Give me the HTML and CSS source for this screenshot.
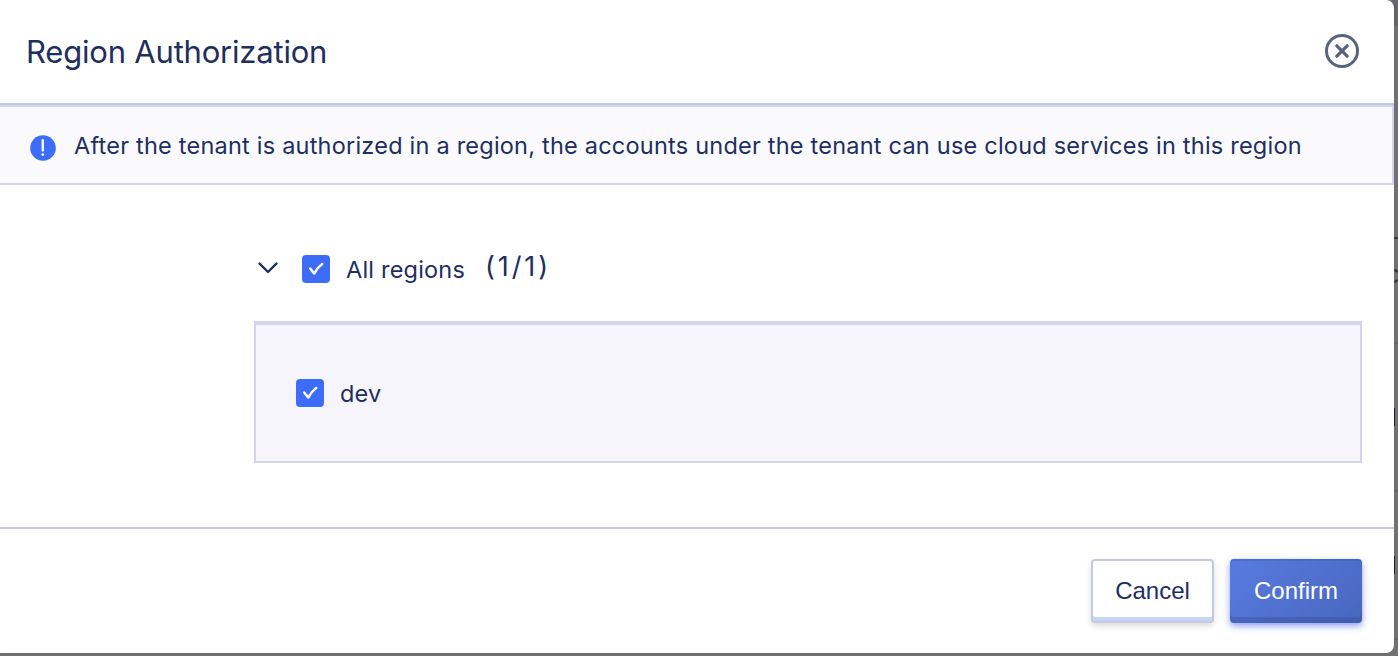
FILE: index.html
```html
<!DOCTYPE html>
<html lang="en">
<head>
<meta charset="utf-8">
<title>Region Authorization</title>
<link rel="stylesheet" href="styles.css">
</head>
<body>
<div class="backdrop" aria-hidden="true">
  <i class="shade"></i><i class="dash"></i>
  <svg class="peek" viewBox="0 0 4 14"><path d="M0 1.2H1.5Q3 1.6 3.6 3.5M0 12.6H1.5Q3 12.2 3.8 10.5"/></svg>
  <i class="line l1"></i><i class="line l2"></i><i class="line l3"></i>
  <i class="mark m1"></i><i class="mark m2"></i>
</div>
<main class="modal">
  <header class="header">
    <h1 class="title">Region Authorization</h1>
    <svg class="close" viewBox="0 0 34 34"><circle cx="17" cy="17" r="15.5"/><path d="M11.8 11.8l10.4 10.4M22.2 11.8L11.8 22.2"/></svg>
  </header>
  <section class="notice">
    <svg class="info" viewBox="0 0 26 26"><circle cx="13" cy="13" r="12.8"/><path d="M12.8 5.2v10.2"/><circle class="dot" cx="12.8" cy="19.6" r="1.4"/></svg>
    <p class="notice-text">After the tenant is authorized in a region, the accounts under the tenant can use cloud services in this region</p>
  </section>
  <section class="content">
    <div class="group">
      <svg class="chevron" viewBox="0 0 20 12"><path d="M1.6 1.6L10 10L18.4 1.6"/></svg>
      <svg class="check" viewBox="0 0 28 28"><path d="M8.2 13.4L12.2 18.6Q15.2 12.6 20.2 9"/></svg>
      <span class="label all">All regions</span>
      <span class="count">(1/1)</span>
    </div>
    <div class="panel">
      <svg class="check" viewBox="0 0 28 28"><path d="M8.2 13.4L12.2 18.6Q15.2 12.6 20.2 9"/></svg>
      <span class="label dev">dev</span>
    </div>
  </section>
  <footer class="footer">
    <button class="btn cancel">Cancel</button>
    <button class="btn confirm">Confirm</button>
  </footer>
</main>
</body>
</html>
```
FILE: styles.css
```css
* { box-sizing: border-box; }
body {
  margin: 0;
  height: 656px;
  overflow: hidden;
  background: #747474;
  color: #202e60;
  font-family: Inter, "Liberation Sans", sans-serif;
}
.modal {
  position: relative;
  display: flex;
  flex-direction: column;
  width: 1394px;
  height: 653px;
  background: #fff;
  border-radius: 0 8px 8px 0;
  box-shadow: 0 1px 4px rgba(0, 0, 0, .1);
}
.header {
  display: flex;
  align-items: center;
  justify-content: space-between;
  height: 105px;
  padding: 0 35px 2px 26px;
  border-bottom: 2px solid #c4cadb;
}
.title { margin: 0; padding-top: 2px; font-size: 31px; font-weight: 400; line-height: 40px; letter-spacing: -.2px; white-space: nowrap; }
.close { width: 34px; height: 34px; fill: none; stroke: #57647b; stroke-width: 3; }
.close path { stroke-width: 3.2; stroke-linecap: round; }
.notice {
  display: flex;
  align-items: center;
  height: 80px;
  padding-left: 30px;
  background: #fafafd;
  border: 2px solid #d3d6ea;
  border-left: 0;
}
.info { width: 26px; height: 26px; margin: 5px 18px 0 0; fill: #3d6cf9; }
.info path { stroke: #fff; stroke-width: 2.4; stroke-linecap: round; }
.info .dot { fill: #fff; }
.notice-text { margin: 0; padding-top: 2px; font-size: 23.5px; line-height: 32px; letter-spacing: .22px; white-space: nowrap; }
.content { flex: 1; padding: 64px 32px 0 254px; }
.group { display: flex; align-items: center; height: 40px; padding-left: 4px; }
.chevron { width: 20px; height: 12px; margin: -2px 24px 0 0; fill: none; stroke: #202e60; stroke-width: 2.4; stroke-linecap: round; stroke-linejoin: round; }
.check { width: 28px; height: 28px; margin-right: 16px; border-radius: 4px; background: #3d6cf9; fill: none; stroke: #fff; stroke-width: 2.4; stroke-linecap: round; stroke-linejoin: round; }
.label { font-size: 23.5px; line-height: 32px; letter-spacing: .2px; white-space: nowrap; }
.all { width: 139px; padding-top: 2px; }
.dev { padding-top: 2px; }
.count { margin-top: -4px; font-size: 27px; line-height: 34px; letter-spacing: 2.9px; }
.panel {
  display: flex;
  align-items: center;
  height: 142px;
  margin-top: 32px;
  padding-left: 40px;
  background: #f6f5fb;
  border: 2px solid #d3d6ea;
  border-top-width: 4px;
}
.footer {
  display: flex;
  gap: 16px;
  justify-content: flex-end;
  height: 126px;
  padding: 30px 32px 0 0;
  border-top: 2px solid #c4cadb;
}
.btn { height: 64px; padding: 0; border-radius: 4px; font: 24px/60px "Liberation Sans", Arial, sans-serif; }
.cancel {
  width: 123px;
  background: #fff;
  border: 2px solid #c4cadb;
  color: #202e60;
  box-shadow: inset 0 -4px #c5d4f8, 0 3px 6px rgba(0, 0, 0, .14);
}
.confirm {
  width: 132px;
  background: linear-gradient(135deg, #587be1, #4867be);
  border: 0;
  color: #fff;
  box-shadow: inset 0 -6px rgba(48, 65, 130, .28), inset 0 2px rgba(48, 65, 130, .2), 0 3px 7px rgba(61, 95, 240, .6);
}
.backdrop { position: absolute; inset: 0; overflow: hidden; }
.backdrop > * { position: absolute; }
.shade { right: 0; top: 0; width: 6px; height: 26px; background: #66666e; }
.dash { left: 1394px; top: 237px; width: 4px; height: 2px; background: #3d3d42; }
.peek { left: 1394px; top: 269px; width: 4px; height: 14px; fill: none; stroke: #33353c; stroke-width: 2; }
.line { left: 1394px; width: 4px; height: 2px; background: #66666e; }
.l1 { top: 342px; }
.l2 { top: 490px; }
.l3 { top: 638px; }
.mark { left: 1394px; width: 1px; height: 18px; background: #171d3d; }
.m1 { top: 408px; }
.m2 { top: 556px; }
```
